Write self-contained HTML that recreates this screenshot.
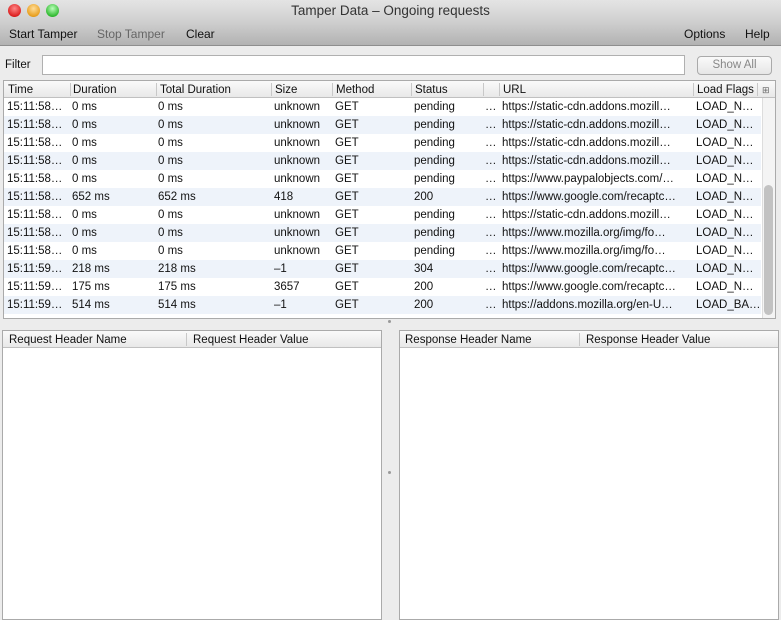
<!DOCTYPE html>
<html><head><style>
*{margin:0;padding:0;box-sizing:border-box}
body{width:781px;height:619px;overflow:hidden;background:#ececec;font-family:"Liberation Sans",sans-serif;font-size:11.5px;color:#111;position:relative}
.a{position:absolute}
#title{left:0;top:0;width:781px;height:22px;background:linear-gradient(#e4e4e4,#cfcfcf);text-align:center;line-height:22px;font-size:13.5px;color:#333}
#tb{left:0;top:22px;width:781px;height:24px;background:linear-gradient(#cfcfcf,#b2b2b2);border-bottom:1px solid #8e8e8e}
.dot{top:4px;width:13px;height:13px;border-radius:50%}
.tbt{top:27px;font-size:12px}
.box{background:#fff;border:1px solid #aaa}
.hdr{height:17px;background:linear-gradient(#fafafa,#e8e8e8);border-bottom:1px solid #c0c0c0;position:relative}
.hdr span{position:absolute;top:2px;line-height:15px}
.sep{position:absolute;top:2px;width:1px;height:13px;background:#c8c8c8}
.row{position:absolute;left:0;height:18px;width:757px}
.row span{position:absolute;top:2px;line-height:15px;white-space:nowrap}
.alt{background:#eef3fa}
</style></head><body>
<div id="title" class="a">Tamper Data – Ongoing requests</div>
<div class="a dot" style="left:8px;background:radial-gradient(circle at 50% 35%,#f88,#d22 70%,#a00)"></div>
<div class="a dot" style="left:27px;background:radial-gradient(circle at 50% 35%,#fd9,#e9a020 70%,#b70)"></div>
<div class="a dot" style="left:46px;background:radial-gradient(circle at 50% 35%,#bfb,#3b3 70%,#181)"></div>
<div id="tb" class="a"></div>
<div class="a tbt" style="left:9px">Start Tamper</div>
<div class="a tbt" style="left:97px;color:#666">Stop Tamper</div>
<div class="a tbt" style="left:186px">Clear</div>
<div class="a tbt" style="left:684px">Options</div>
<div class="a tbt" style="left:745px">Help</div>
<div class="a" style="left:5px;top:59px">Filter</div>
<div class="a box" style="left:42px;top:55px;width:643px;height:20px;border-color:#b0b0b0"></div>
<div class="a" style="left:697px;top:56px;width:75px;height:19px;border:1px solid #aaa;border-radius:4px;background:linear-gradient(#fafafa,#e6e6e6);color:#888;text-align:center;line-height:17px">Show All</div>
<div class="a box" style="left:3px;top:80px;width:773px;height:239px;overflow:hidden">
<div class="hdr"><span style="left:4px">Time</span><i class="sep" style="left:66px"></i><span style="left:69px">Duration</span><i class="sep" style="left:152px"></i><span style="left:156px">Total Duration</span><i class="sep" style="left:267px"></i><span style="left:271px">Size</span><i class="sep" style="left:328px"></i><span style="left:332px">Method</span><i class="sep" style="left:407px"></i><span style="left:411px">Status</span><i class="sep" style="left:479px"></i><i class="sep" style="left:495px"></i><span style="left:499px">URL</span><i class="sep" style="left:689px"></i><span style="left:693px">Load Flags</span><i class="sep" style="left:753px"></i><span style="left:758px;font-size:9px;color:#666">⊞</span></div>
<div id="rows"></div>
<div class="a" style="left:758px;top:17px;width:14px;height:222px;background:#f4f4f4;border-left:1px solid #ddd"></div>
<div class="a" style="left:760px;top:104px;width:9px;height:130px;border-radius:5px;background:#c2c2c2"></div>
</div>
<div class="a" style="left:388px;top:320px;width:3px;height:3px;background:#999;border-radius:50%"></div>
<div class="a" style="left:388px;top:471px;width:3px;height:3px;background:#999;border-radius:50%"></div>
<div class="a box" style="left:2px;top:330px;width:380px;height:290px">
<div class="hdr"><span style="left:6px">Request Header Name</span><i class="sep" style="left:183px"></i><span style="left:190px">Request Header Value</span></div></div>
<div class="a box" style="left:399px;top:330px;width:380px;height:290px">
<div class="hdr"><span style="left:5px">Response Header Name</span><i class="sep" style="left:179px"></i><span style="left:186px">Response Header Value</span></div></div>
<script>
var d=[["15:11:58…","0 ms","0 ms","unknown","GET","pending","https://static-cdn.addons.mozill…","LOAD_N…"],
["15:11:58…","0 ms","0 ms","unknown","GET","pending","https://static-cdn.addons.mozill…","LOAD_N…"],
["15:11:58…","0 ms","0 ms","unknown","GET","pending","https://static-cdn.addons.mozill…","LOAD_N…"],
["15:11:58…","0 ms","0 ms","unknown","GET","pending","https://static-cdn.addons.mozill…","LOAD_N…"],
["15:11:58…","0 ms","0 ms","unknown","GET","pending","https://www.paypalobjects.com/…","LOAD_N…"],
["15:11:58…","652 ms","652 ms","418","GET","200","https://www.google.com/recaptc…","LOAD_N…"],
["15:11:58…","0 ms","0 ms","unknown","GET","pending","https://static-cdn.addons.mozill…","LOAD_N…"],
["15:11:58…","0 ms","0 ms","unknown","GET","pending","https://www.mozilla.org/img/fo…","LOAD_N…"],
["15:11:58…","0 ms","0 ms","unknown","GET","pending","https://www.mozilla.org/img/fo…","LOAD_N…"],
["15:11:59…","218 ms","218 ms","–1","GET","304","https://www.google.com/recaptc…","LOAD_N…"],
["15:11:59…","175 ms","175 ms","3657","GET","200","https://www.google.com/recaptc…","LOAD_N…"],
["15:11:59…","514 ms","514 ms","–1","GET","200","https://addons.mozilla.org/en-U…","LOAD_BA…"]];
var x=[3,68,154,270,331,410,481,498,692],h="";
d.forEach(function(r,i){h+='<div class="row'+(i%2?' alt':'')+'" style="top:'+(17+i*18)+'px">';
var c=r.slice(0,6).concat(["…"],r.slice(6));
c.forEach(function(t,j){h+='<span style="left:'+x[j]+'px">'+t+'</span>'});h+='</div>'});
document.getElementById('rows').innerHTML=h;
</script>
</body></html>
